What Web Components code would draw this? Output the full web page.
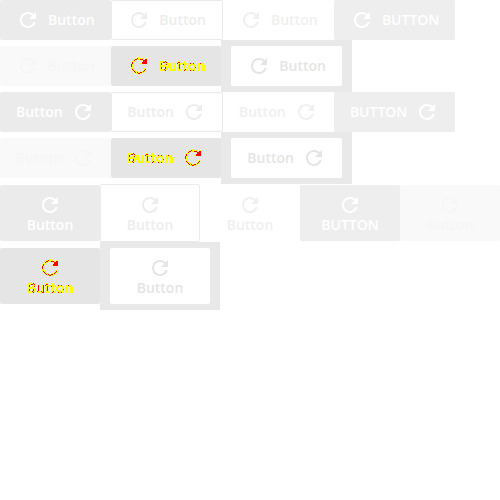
<!DOCTYPE html>
<html lang="en"><head><meta charset="utf-8"><title>Buttons</title>
<style>body{margin:0;background:#fff;width:500px;height:500px;overflow:hidden}</style></head>
<body><button-sheet></button-sheet>
<script>
class IconButton extends HTMLElement{
  constructor(){super();this.attachShadow({mode:'open'}).innerHTML=`
<style>
:host{display:flex;flex:none;box-sizing:border-box;height:40px;padding:0 16px;gap:8px;align-items:center;justify-content:center;border-radius:2px;
 font:600 14px/20px "Open Sans","Noto Sans",sans-serif;color:#fff;background:#ebebeb;white-space:nowrap}
:host([end]){flex-direction:row-reverse}
:host([kind=outline]){background:#fff;color:#ededed;box-shadow:inset 0 0 0 1px #ebebeb;padding:0 16.7px}
:host([kind=flat]){background:#fff;color:#f0f0f0;padding:0 16.3px}
:host([kind=caps]){background:#eee;text-transform:uppercase}
:host([kind=off]){background:#f9f9f9;color:#f6f6f6}
:host([kind=inverse]){background:#fff;color:#e5e5e5}
:host([kind=hot]){background:#e5e5e5;color:#ff0}
:host([kind=hot]) span{filter:url(#threshold)}
:host([stack]){flex-direction:column;justify-content:flex-start;width:100px;height:56px;padding:8px 0 0;gap:0}
:host([stack]) span{margin-top:-2px}
:host([kind=outline][stack]){height:58px;margin-top:-1px;padding-top:9px}
svg{display:block;width:24px;height:24px;flex:none}
svg.defs{position:absolute;width:0;height:0}
.hot{display:none;fill:none}
:host([kind=hot]) .hot{display:block}:host([kind=hot]) .plain{display:none}
</style>
<svg class="plain" viewBox="0 0 24 24" fill="currentColor"><path d="M17.65 6.35C16.2 4.9 14.21 4 12 4c-4.42 0-7.99 3.58-7.99 8s3.57 8 7.99 8c3.73 0 6.84-2.55 7.73-6h-2.08c-.82 2.33-3.04 4-5.65 4-3.31 0-6-2.69-6-6s2.69-6 6-6c1.66 0 3.14.69 4.22 1.78L13 11h7V4l-2.35 2.35z"/></svg>
<svg class="hot" viewBox="0 0 24 24" shape-rendering="crispEdges"><path d="M17.3 6.7A7.3 7.3 0 1 0 18.9 14.3" stroke="#ff0" stroke-width="2.2"/><path d="M17 6.8A7.2 7.2 0 1 0 18.5 15" stroke="#f00" stroke-dasharray="5 1.5"/><path d="M14 10V9h1V8h1V7h1V6h1V5h2v5z" fill="#f00"/><path d="M13.5 10V9h1M18.5 5V4.5h1" stroke="#ff0"/></svg>
<svg class="defs"><filter id="threshold" x="-10%" y="0" width="120%" height="100%" color-interpolation-filters="sRGB"><feColorMatrix values="0 0 0 0 1  0 0 0 1 0  0 0 0 0 0  0 0 0 1 0"/><feComponentTransfer><feFuncG type="discrete" tableValues="1 1 1 1 1 1 0 0 1 1"/><feFuncA type="discrete" tableValues="0 0 1 1 1 1 1 1 1 1"/></feComponentTransfer></filter></svg>
<span><slot></slot></span>`}
}
customElements.define('icon-button',IconButton);
class ButtonRow extends HTMLElement{
  constructor(){super();this.attachShadow({mode:'open'}).innerHTML=`<style>:host{display:flex;align-items:flex-start;height:40px}:host([size=framed]){height:52px;align-items:center}:host([size=tall]){height:57px;padding-top:1px}:host([size=tallframed]){height:68px;align-items:center}</style><slot></slot>`}
}
customElements.define('button-row',ButtonRow);
class DarkFrame extends HTMLElement{
  constructor(){super();this.attachShadow({mode:'open'}).innerHTML=`<style>:host{display:flex;flex:none;padding:6px 10px;background:#e9e9e9}</style><slot></slot>`}
}
customElements.define('dark-frame',DarkFrame);
class ButtonSheet extends HTMLElement{
  constructor(){super();
    const b=(k,a='')=>`<icon-button kind="${k}" ${a}>Button</icon-button>`;
    const plain=a=>b('fill',a)+b('outline',a)+b('flat',a)+b('caps',a);
    const hot=a=>b('hot',a)+`<dark-frame>${b('inverse',a)}</dark-frame>`;
    this.attachShadow({mode:'open'}).innerHTML=`<style>:host{display:block;width:500px}</style>
<button-row>${plain('')}</button-row><button-row size="framed">${b('off')+hot('')}</button-row>
<button-row>${plain('end')}</button-row><button-row size="framed">${b('off','end')+hot('end')}</button-row>
<button-row size="tall">${plain('stack')+b('off','stack')}</button-row><button-row size="tallframed">${hot('stack')}</button-row>`}
}
customElements.define('button-sheet',ButtonSheet);
</script></body></html>
